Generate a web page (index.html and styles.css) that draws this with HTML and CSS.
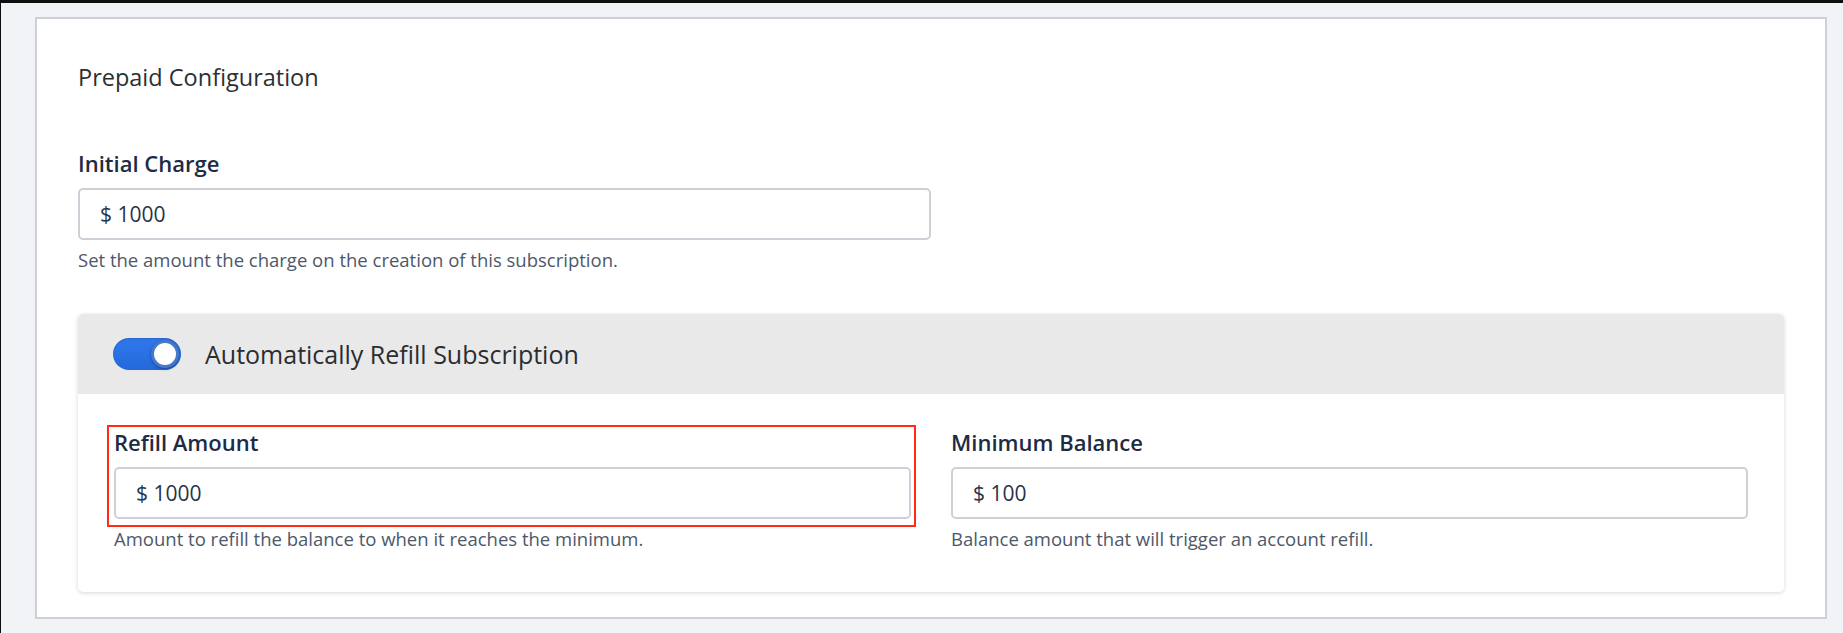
FILE: index.html
```html
<!DOCTYPE html>
<html lang="en">
<head>
<meta charset="utf-8">
<title>Prepaid Configuration</title>
<link rel="stylesheet" href="styles.css">
</head>
<body>
<div class="page">
  <section class="panel">
    <h2 class="panel-title">Prepaid Configuration</h2>

    <div class="field">
      <div class="field-label">Initial Charge</div>
      <div class="input input-wide">$ 1000</div>
      <div class="help">Set the amount the charge on the creation of this subscription.</div>
    </div>

    <div class="card">
      <div class="card-header">
        <span class="toggle" role="switch" aria-checked="true"><span class="toggle-thumb"></span></span>
        <span class="card-title">Automatically Refill Subscription</span>
      </div>
      <div class="card-body">
        <div class="field">
          <div class="highlight">
            <div class="field-label">Refill Amount</div>
            <div class="input">$ 1000</div>
          </div>
          <div class="help">Amount to refill the balance to when it reaches the minimum.</div>
        </div>
        <div class="field">
          <div class="field-label">Minimum Balance</div>
          <div class="input">$ 100</div>
          <div class="help">Balance amount that will trigger an account refill.</div>
        </div>
      </div>
    </div>
  </section>
</div>
</body>
</html>
```

FILE: styles.css
```css
* { box-sizing: border-box; }

html, body { margin: 0; padding: 0; }

body {
  background: #f2f3f6;
  border-top: 3px solid #0f0f10;
  border-left: 1px solid #0f0f10;
  min-height: 100vh;
  font-family: "Open Sans", "Noto Sans", "Liberation Sans", sans-serif;
}

.page {
  padding: 14px 16px 13px 34px;
}

.panel {
  background: #ffffff;
  border: 2px solid #cdd0d5;
  padding: 44px 41px 25px 41px;
}

.panel-title {
  margin: 0;
  font-size: 23.5px;
  line-height: 28px;
  font-weight: 400;
  color: #2d2f33;
}

.panel-title + .field {
  margin-top: 59px;
}

.field-label {
  font-size: 22px;
  line-height: 26px;
  font-weight: 600;
  color: #1d2b45;
  margin-bottom: 12px;
}

.input {
  height: 52px;
  border: 2px solid #cdd1d7;
  border-radius: 5px;
  background: #fff;
  padding: 0 20px;
  display: flex;
  align-items: center;
  font-size: 21px;
  color: #27334a;
}

.input-wide {
  width: 853px;
}

.help {
  margin-top: 9px;
  font-size: 18.5px;
  line-height: 22px;
  color: #4d586a;
}

.card {
  margin-top: 43px;
  background: #fff;
  border-radius: 5px;
  box-shadow: 0 1px 4px rgba(0, 0, 0, 0.16);
}

.card-header {
  height: 80px;
  background: #e9e9e9;
  border-radius: 5px 5px 0 0;
  display: flex;
  align-items: center;
  padding-left: 35px;
  gap: 24px;
}

.toggle {
  position: relative;
  width: 68px;
  height: 32px;
  border-radius: 16px;
  background: linear-gradient(#2f78ec, #2469dc);
  box-shadow: inset 0 1px 2px rgba(0, 0, 0, 0.15);
  flex: none;
}

.toggle-thumb {
  position: absolute;
  top: 2px;
  right: 2px;
  width: 28px;
  height: 28px;
  border-radius: 50%;
  background: #fff;
  border: 3px solid #4677c9;
  box-shadow: 0 1px 3px rgba(0, 0, 0, 0.35);
}

.card-title {
  font-size: 25px;
  line-height: 30px;
  color: #2b2d31;
}

.card-body {
  display: grid;
  grid-template-columns: 1fr 1fr;
  gap: 40px;
  padding: 35px 36px 42px 36px;
}

.highlight {
  position: relative;
}

.highlight::after {
  content: "";
  position: absolute;
  top: -4px;
  left: -7px;
  right: -5px;
  bottom: -8px;
  border: 2.5px solid #ff2b14;
  pointer-events: none;
}
```
